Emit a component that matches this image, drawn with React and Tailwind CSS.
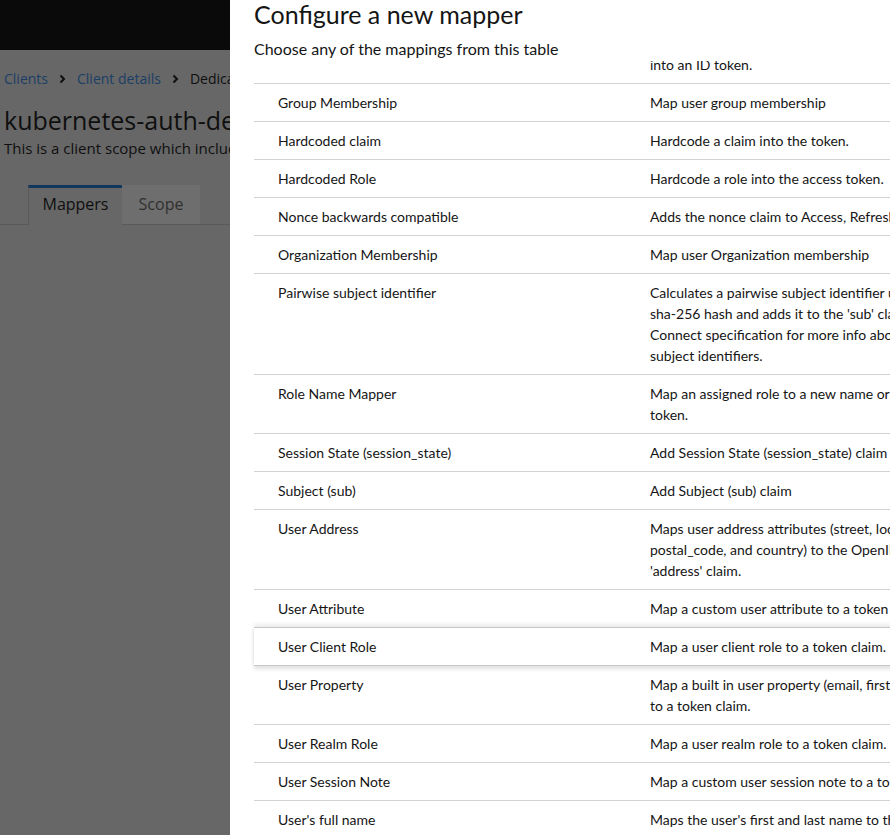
import React from "react";

const rows = [
  { name: "Claims parameter with value ID Token", desc: ["Claims specified by Claims parameter with value are put", "into an ID token."] },
  { name: "Group Membership", desc: ["Map user group membership"] },
  { name: "Hardcoded claim", desc: ["Hardcode a claim into the token."] },
  { name: "Hardcoded Role", desc: ["Hardcode a role into the access token."] },
  { name: "Nonce backwards compatible", desc: ["Adds the nonce claim to Access, Refresh and ID tokens for backwards compatibility."] },
  { name: "Organization Membership", desc: ["Map user Organization membership"] },
  {
    name: "Pairwise subject identifier",
    desc: [
      "Calculates a pairwise subject identifier using a salted",
      "sha-256 hash and adds it to the 'sub' claim. See OpenID",
      "Connect specification for more info about pairwise",
      "subject identifiers.",
    ],
  },
  { name: "Role Name Mapper", desc: ["Map an assigned role to a new name or position in the", "token."] },
  { name: "Session State (session_state)", desc: ["Add Session State (session_state) claim"] },
  { name: "Subject (sub)", desc: ["Add Subject (sub) claim"] },
  {
    name: "User Address",
    desc: ["Maps user address attributes (street, locality, region,", "postal_code, and country) to the OpenID Connect", "'address' claim."],
  },
  { name: "User Attribute", desc: ["Map a custom user attribute to a token claim."] },
  { name: "User Client Role", desc: ["Map a user client role to a token claim."], hover: true },
  { name: "User Property", desc: ["Map a built in user property (email, firstName, lastName)", "to a token claim."] },
  { name: "User Realm Role", desc: ["Map a user realm role to a token claim."] },
  { name: "User Session Note", desc: ["Map a custom user session note to a token claim."] },
  { name: "User's full name", desc: ["Maps the user's first and last name to the OpenID Connect 'name'", "claim. Format is <first> + ' ' + <last>"] },
];

function Chevron() {
  return (
    <svg width="7" height="10" viewBox="0 0 7 10" className="shrink-0">
      <path d="M1.5 1.5 L5 5 L1.5 8.5" fill="none" stroke="#0f0f0f" strokeWidth="2" />
    </svg>
  );
}

export default function App() {
  return (
    <div className="relative w-[890px] h-[835px] overflow-hidden bg-[#676767] font-['Open_Sans',sans-serif] text-[#0f0f0f]">
      <div className="h-[50px] bg-[#0a0a0a]" />
      <div className="pl-1 pt-[18px]">
        <nav className="flex items-center text-[14px] leading-[21px] whitespace-nowrap">
          <span className="text-[#1b3f66]">Clients</span>
          <span className="ml-[11px] mr-[11px]"><Chevron /></span>
          <span className="text-[#1b3f66]">Client details</span>
          <span className="ml-[11px] mr-[11px]"><Chevron /></span>
          <span>Dedicated scopes</span>
        </nav>
        <h1 className="mt-[16px] text-[25px] leading-[31px] whitespace-nowrap">kubernetes-auth-dedicated</h1>
        <p className="mt-[2px] text-[15px] leading-[21px] whitespace-nowrap">This is a client scope which includes the dedicated mappers and scope</p>
      </div>
      <div className="mt-[26px] flex h-[40px] border-b border-[#5a5a5a] pl-[28px] text-[16px] leading-[24px]">
        <div className="relative -mb-px h-[40px] w-[94px] border-l border-t-[3px] border-l-[#5a5a5a] border-t-[#12375c] bg-[#676767] pt-[4px] text-center text-[#0f0f0f]">
          Mappers
        </div>
        <div className="h-[39px] w-[78px] bg-[#6e6e6e] pt-[7px] text-center text-[#303030]">Scope</div>
      </div>

      <div className="absolute left-[230px] top-0 bottom-0 flex w-[760px] flex-col bg-white font-['Lato',sans-serif] text-[#151515]">
        <div className="px-6 pb-[2px]">
          <h2 className="mt-[-1px] text-[25px] leading-[31px] whitespace-nowrap">Configure a new mapper</h2>
          <p className="mt-[8px] text-[16px] leading-[21px] whitespace-nowrap">Choose any of the mappings from this table</p>
        </div>
        <div className="flex-1 overflow-hidden pl-6">
          <div className="mt-[-36px] text-[14px] leading-[21px]">
            {rows.map((r) => (
              <div
                key={r.name}
                className={
                  r.hover
                    ? "relative z-10 flex border-y border-[#c7c7c7] -mt-px bg-white py-2 shadow-[0_-3px_4px_rgba(3,3,3,0.08),0_3px_4px_rgba(3,3,3,0.12)]"
                    : "flex border-b border-[#d2d2d2] py-2"
                }
              >
                <div className="w-[396px] shrink-0 pl-6 whitespace-nowrap">{r.name}</div>
                <div className="whitespace-nowrap">
                  {r.desc.map((l, i) => (
                    <div key={i}>{l}</div>
                  ))}
                </div>
              </div>
            ))}
          </div>
        </div>
      </div>
    </div>
  );
}
